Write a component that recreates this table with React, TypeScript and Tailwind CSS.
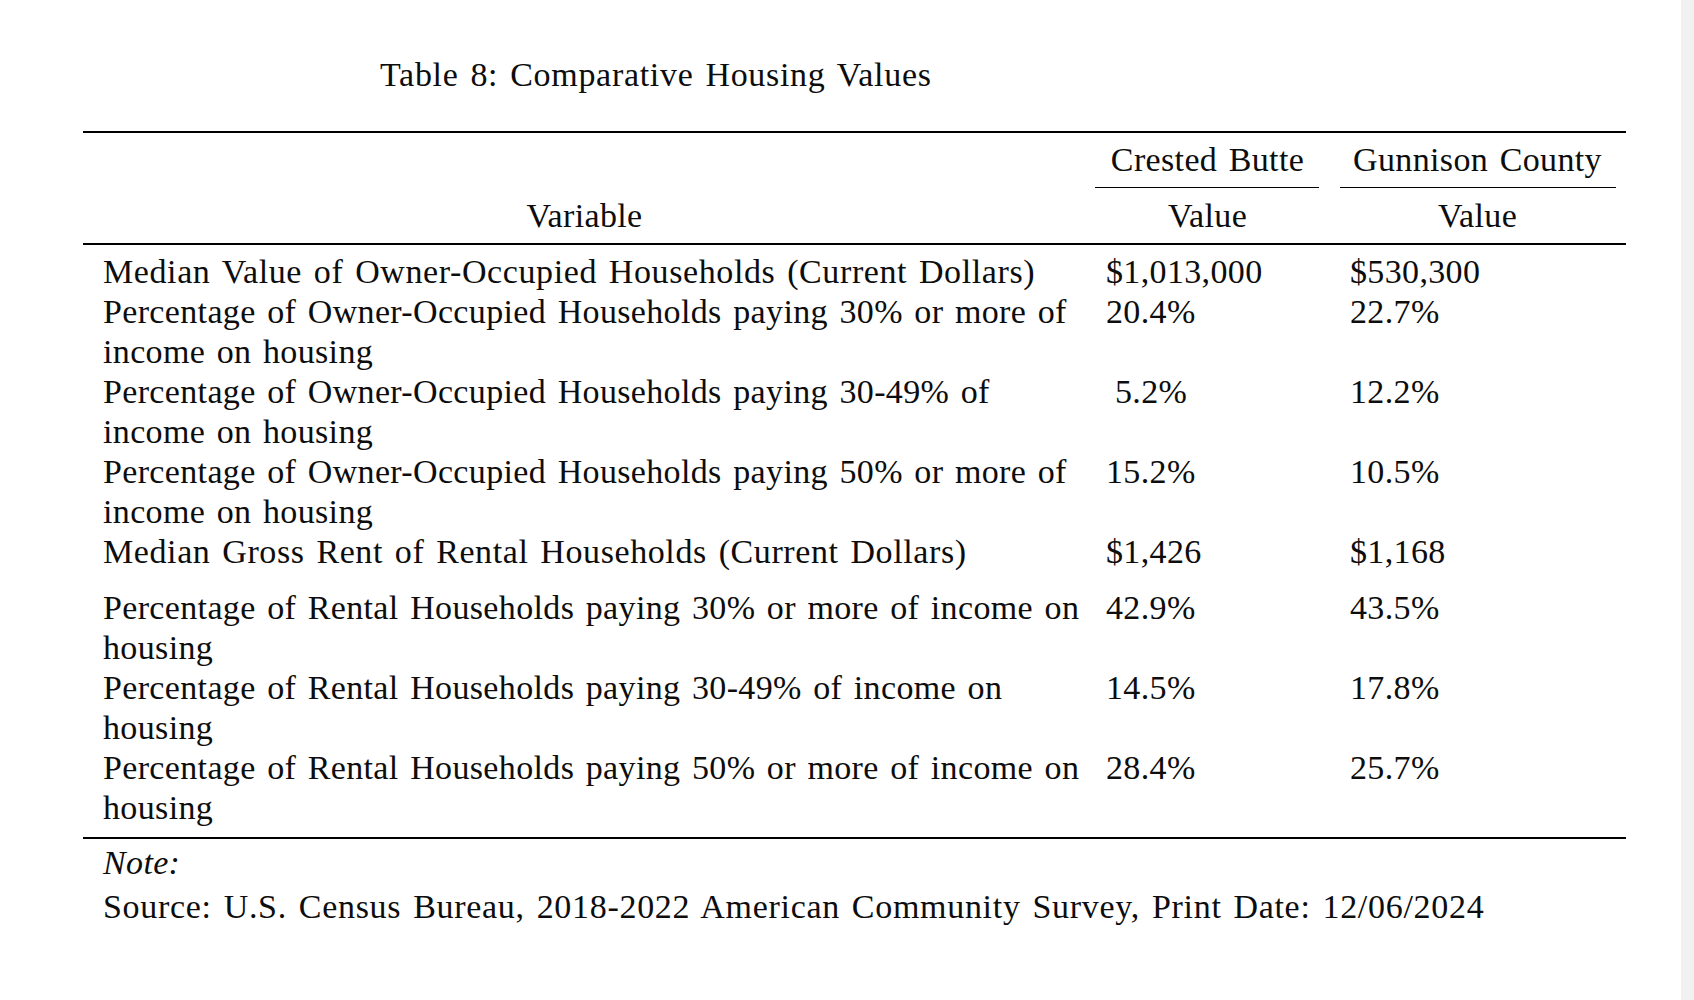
// Comparative housing values table, styled after a LaTeX booktabs table.

type Row = {
  lines: string[]
  crested: string
  gunnison: string
  indent?: boolean
  gapBefore?: boolean
  wide?: boolean
}

const ROWS: Row[] = [
  {
    lines: ['Median Value of Owner-Occupied Households (Current Dollars)'],
    crested: '$1,013,000',
    gunnison: '$530,300',
    wide: true,
  },
  {
    lines: ['Percentage of Owner-Occupied Households paying 30% or more of', 'income on housing'],
    crested: '20.4%',
    gunnison: '22.7%',
  },
  {
    lines: ['Percentage of Owner-Occupied Households paying 30-49% of', 'income on housing'],
    crested: '5.2%',
    gunnison: '12.2%',
    indent: true,
  },
  {
    lines: ['Percentage of Owner-Occupied Households paying 50% or more of', 'income on housing'],
    crested: '15.2%',
    gunnison: '10.5%',
  },
  {
    lines: ['Median Gross Rent of Rental Households (Current Dollars)'],
    crested: '$1,426',
    gunnison: '$1,168',
    wide: true,
  },
  {
    lines: ['Percentage of Rental Households paying 30% or more of income on', 'housing'],
    crested: '42.9%',
    gunnison: '43.5%',
    gapBefore: true,
  },
  {
    lines: ['Percentage of Rental Households paying 30-49% of income on', 'housing'],
    crested: '14.5%',
    gunnison: '17.8%',
  },
  {
    lines: ['Percentage of Rental Households paying 50% or more of income on', 'housing'],
    crested: '28.4%',
    gunnison: '25.7%',
  },
]

export default function App() {
  return (
    <div className="flex h-screen bg-white text-[#0d0d0d] font-['Liberation_Serif',serif] text-[34px] leading-[40px] tracking-[0.35px] [word-spacing:2.7px]">
      <div className="flex-1">
        {/* Caption */}
        <div className="pt-[55px] pl-[380px] whitespace-nowrap tracking-[0.7px]">Table 8: Comparative Housing Values</div>

        <div className="ml-[83px] mt-[36px] w-[1543px]">
          {/* toprule */}
          <div className="h-[2px] bg-black" />

          {/* Header */}
          <div className="grid grid-cols-[1003px_243px_297px] pt-[7px]">
            <div className="row-span-2 flex items-end justify-center px-[20px] whitespace-nowrap">Variable</div>
            <div className="flex flex-col">
              <div className="text-center whitespace-nowrap">Crested Butte</div>
              <div className="mt-[7px] ml-[9px] mr-[10px] h-px bg-black" />
              <div className="mt-[8px] text-center">Value</div>
            </div>
            <div className="flex flex-col">
              <div className="text-center whitespace-nowrap">Gunnison County</div>
              <div className="mt-[7px] ml-[11px] mr-[10px] h-px bg-black" />
              <div className="mt-[8px] text-center">Value</div>
            </div>
          </div>

          {/* midrule */}
          <div className="mt-[7px] h-[1.5px] bg-black" />

          {/* Body */}
          <div className="pt-[7px] pb-[9px]">
            {ROWS.map((row) => (
              <div
                key={row.lines[0]}
                className={`grid grid-cols-[1003px_243px_297px] ${row.gapBefore ? 'mt-[16px]' : ''}`}
              >
                <div className={`pl-[20px] whitespace-nowrap ${row.wide ? 'tracking-[0.6px]' : ''}`}>
                  {row.lines.map((line) => (
                    <div key={line}>{line}</div>
                  ))}
                </div>
                <div className={`${row.indent ? 'pl-[29px]' : 'pl-[20px]'} whitespace-nowrap`}>{row.crested}</div>
                <div className="pl-[21px] whitespace-nowrap">{row.gunnison}</div>
              </div>
            ))}
          </div>

          {/* bottomrule */}
          <div className="h-[2px] bg-black" />

          {/* Notes */}
          <div className="pt-[4px] pl-[20px] italic">Note:</div>
          <div className="mt-[4px] pl-[20px] whitespace-nowrap tracking-[0.7px]">
            Source: U.S. Census Bureau, 2018-2022 American Community Survey, Print Date: 12/06/2024
          </div>
        </div>
      </div>

      {/* scrollbar gutter */}
      <div className="w-[13px] bg-[#f1f1f1]" />
    </div>
  )
}
